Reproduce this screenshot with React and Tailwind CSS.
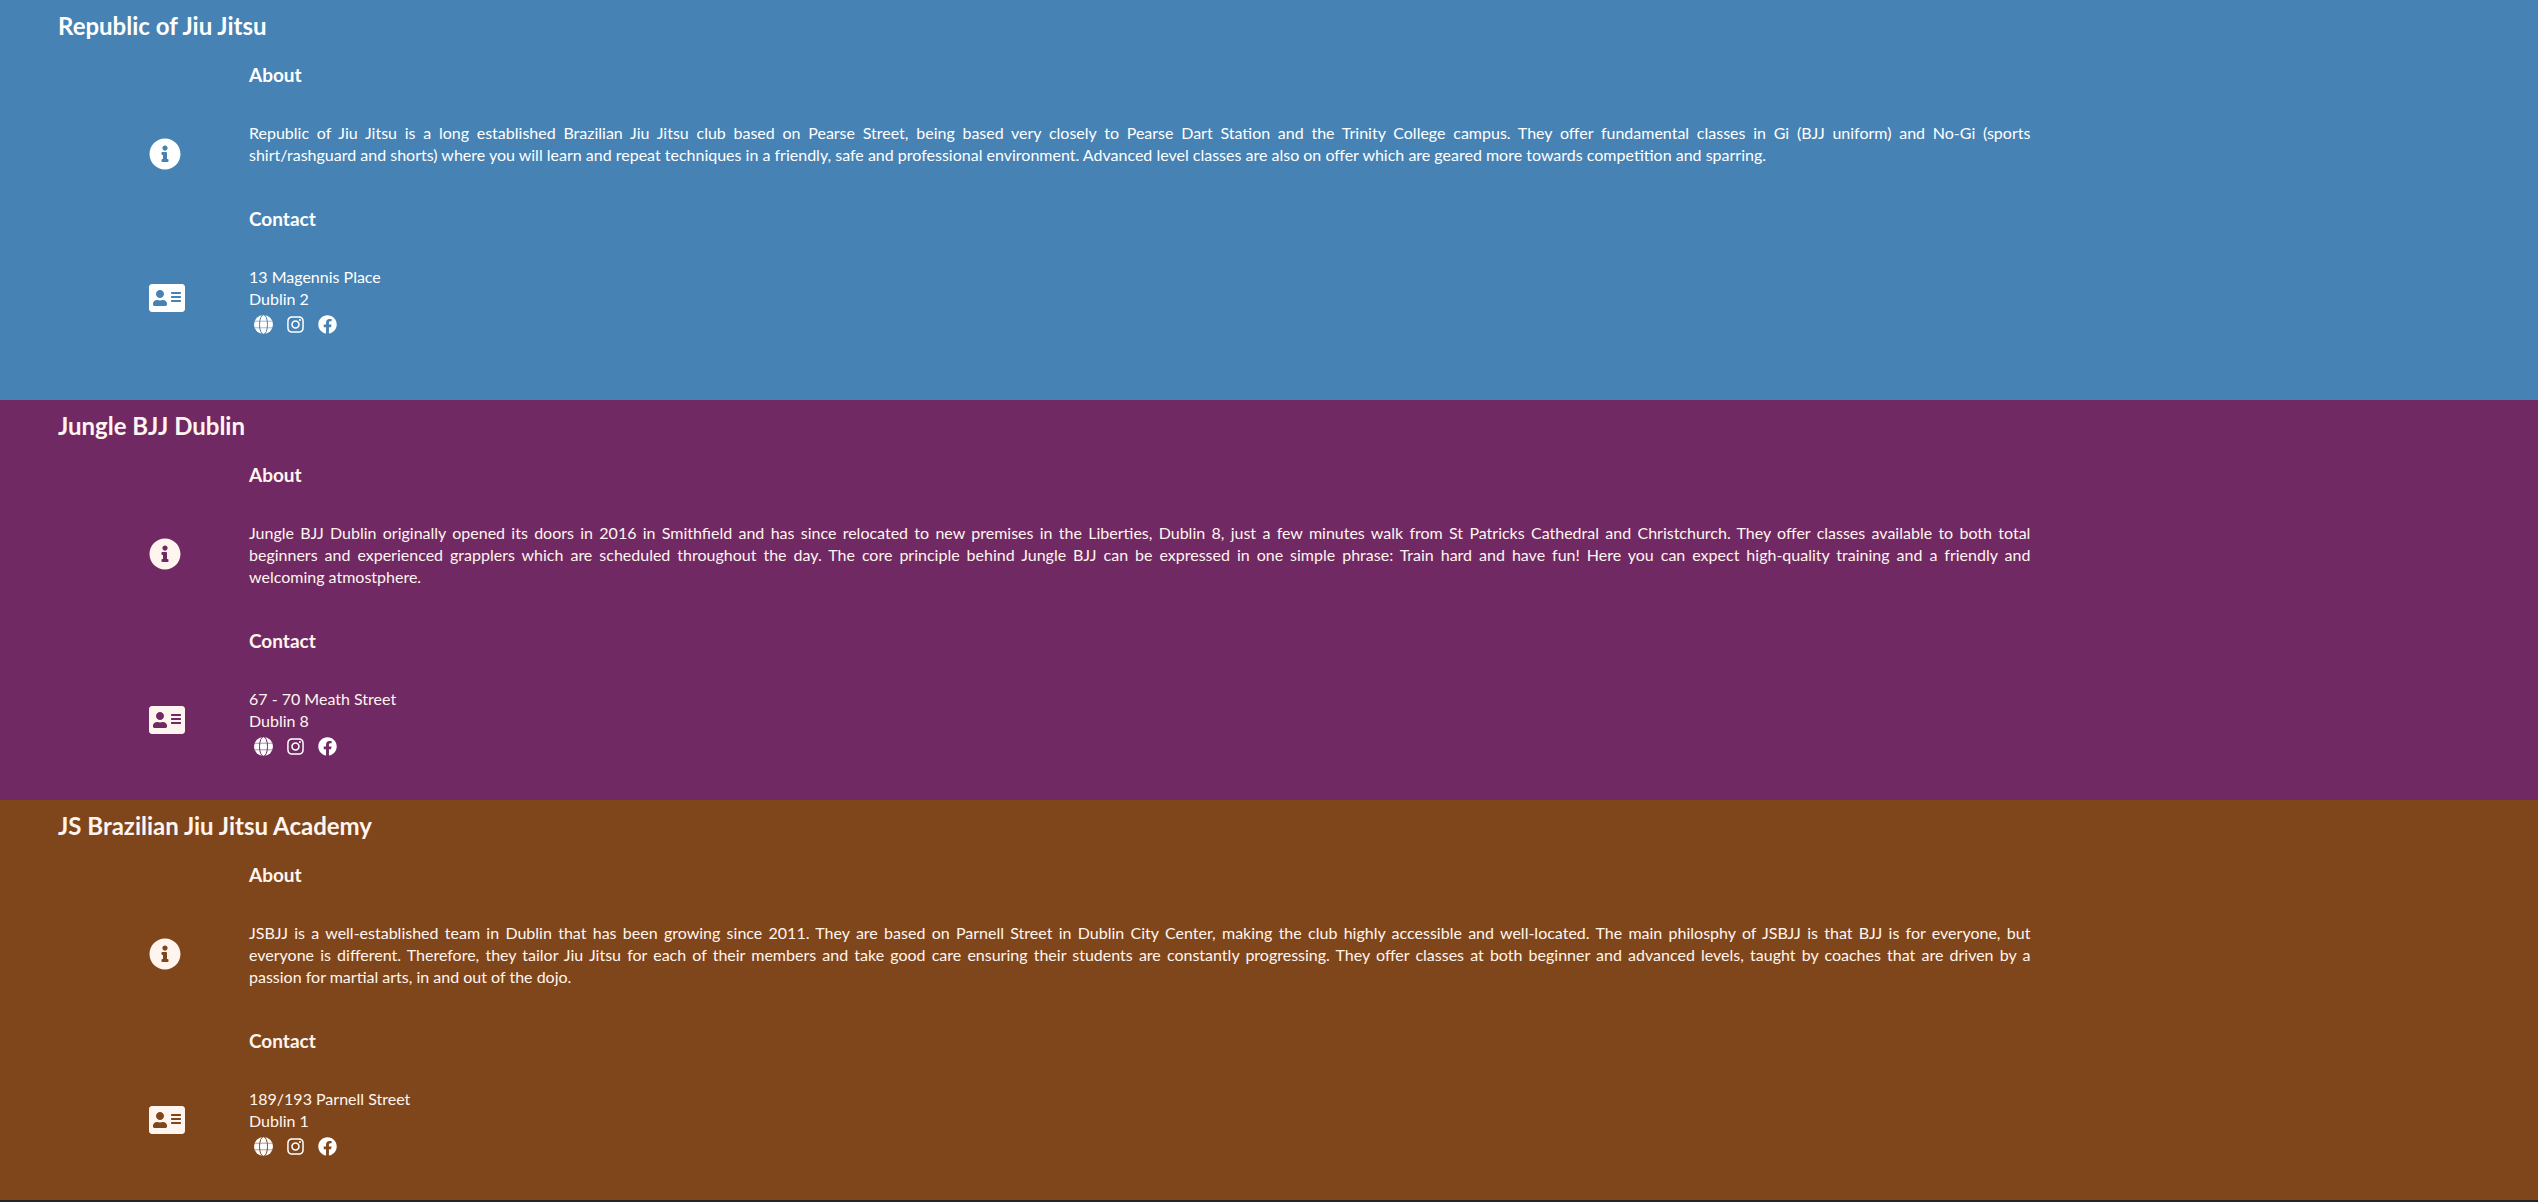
import React, { useId } from "react";
import { FaInfoCircle, FaAddressCard, FaInstagram, FaFacebook } from "react-icons/fa";

const CLUBS = [
  {
    name: "Republic of Jiu Jitsu",
    tone: "bg-[#4682b4] text-white",
    about: [
      "Republic of Jiu Jitsu is a long established Brazilian Jiu Jitsu club based on Pearse Street, being based very closely to Pearse Dart Station and the Trinity College campus. They offer fundamental classes in Gi (BJJ uniform) and No-Gi (sports ",
      "shirt/rashguard and shorts) where you will learn and repeat techniques in a friendly, safe and professional environment. Advanced level classes are also on offer which are geared more towards competition and sparring.",
    ],
    address: ["13 Magennis Place", "Dublin 2"],
  },
  {
    name: "Jungle BJJ Dublin",
    tone: "bg-[#702963] text-[#fff5ee]",
    about: [
      "Jungle BJJ Dublin originally opened its doors in 2016 in Smithfield and has since relocated to new premises in the Liberties, Dublin 8, just a few minutes walk from St Patricks Cathedral and Christchurch. They offer classes available to both total ",
      "beginners and experienced grapplers which are scheduled throughout the day. The core principle behind Jungle BJJ can be expressed in one simple phrase: Train hard and have fun! Here you can expect high-quality training and a friendly and ",
      "welcoming atmostphere.",
    ],
    address: ["67 - 70 Meath Street", "Dublin 8"],
  },
  {
    name: "JS Brazilian Jiu Jitsu Academy",
    tone: "bg-[#80461b] text-[#fff5ee]",
    about: [
      "JSBJJ is a well-established team in Dublin that has been growing since 2011. They are based on Parnell Street in Dublin City Center, making the club highly accessible and well-located. The main philosphy of JSBJJ is that BJJ is for everyone, but ",
      "everyone is different. Therefore, they tailor Jiu Jitsu for each of their members and take good care ensuring their students are constantly progressing. They offer classes at both beginner and advanced levels, taught by coaches that are driven by a ",
      "passion for martial arts, in and out of the dojo.",
    ],
    address: ["189/193 Parnell Street", "Dublin 1"],
  },
];

function GlobeIcon({ className }) {
  const id = useId();
  return (
    <svg viewBox="0 0 19 19" className={className} aria-hidden="true">
      <mask id={id}>
        <circle cx="9.5" cy="9.5" r="9.5" fill="white" />
        <ellipse cx="9.5" cy="9.5" rx="4" ry="9.8" fill="none" stroke="black" strokeWidth="1" />
        <path d="M0 6.2H19M0 12.8H19" stroke="black" strokeWidth="0.8" strokeOpacity="0.7" />
      </mask>
      <rect width="19" height="19" fill="currentColor" mask={`url(#${id})`} />
    </svg>
  );
}

const LINKS = [
  { label: "Website", Icon: GlobeIcon },
  { label: "Instagram", Icon: FaInstagram },
  { label: "Facebook", Icon: FaFacebook },
];

function Detail({ title, Icon, iconClass, children }) {
  return (
    <div className="grid grid-cols-[100px_1fr]">
      <h3 className="col-start-2 mb-[34px] text-[19px] leading-[26px] font-bold">{title}</h3>
      <Icon className={iconClass} aria-hidden="true" />
      <div className="text-base leading-[22px]">{children}</div>
    </div>
  );
}

function Club({ name, tone, about, address }) {
  return (
    <section className={`min-h-[400px] pt-2 pb-6 ${tone}`}>
      <h2 className="ml-[58px] text-2xl leading-9 font-bold">{name}</h2>
      <div className="mt-[18px] ml-[149px] mr-[20%] flex flex-col gap-10">
        <Detail title="About" Icon={FaInfoCircle} iconClass="mt-4 -mb-1 h-8 w-8">
          <p className="text-justify">
            {about.map((line) => (
              <span key={line} className="block [text-align-last:justify] last:[text-align-last:left]">
                {line}
              </span>
            ))}
          </p>
        </Detail>
        <Detail title="Contact" Icon={FaAddressCard} iconClass="mt-4 h-8 w-9">
          <address className="not-italic">
            {address.map((line) => (
              <div key={line}>{line}</div>
            ))}
          </address>
          <div className="mt-[5px] ml-1 flex gap-3 text-white">
            {LINKS.map(({ label, Icon }) => (
              <a key={label} href="#" aria-label={`${name} ${label}`} className="flex w-5 justify-center">
                <Icon className="h-[19px] w-[19px]" />
              </a>
            ))}
          </div>
        </Detail>
      </div>
    </section>
  );
}

export default function App() {
  return (
    <main className="min-h-screen bg-[#212529] font-['Lato',sans-serif]">
      {CLUBS.map((club) => (
        <Club key={club.name} {...club} />
      ))}
    </main>
  );
}
